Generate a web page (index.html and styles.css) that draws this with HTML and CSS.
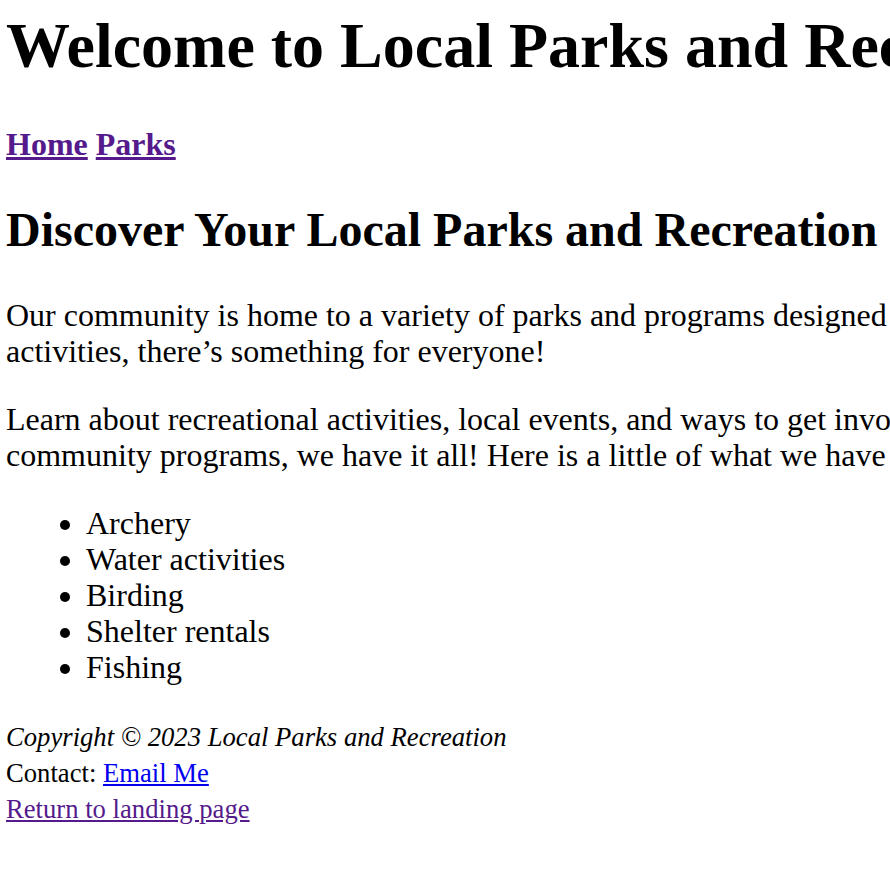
FILE: index.html
```html
<!DOCTYPE html>
<html lang="en">
<head>
<meta charset="utf-8">
<title>Local Parks and Recreation</title>
<link rel="stylesheet" href="styles.css">
</head>
<body>
<header>
<h1 class="title">Welcome to Local Parks and Recreation</h1>
<nav class="nav"><a class="visited" href="#home">Home</a> <a class="visited" href="#parks">Parks</a></nav>
</header>
<main>
<h2 class="subtitle">Discover Your Local Parks and Recreation</h2>
<p class="text">Our community is home to a variety of parks and programs designed for residents of all ages. Whether you love outdoor<br>activities, there’s something for everyone!</p>
<p class="text">Learn about recreational activities, local events, and ways to get involved. From nature trails and picnic areas to<br>community programs, we have it all! Here is a little of what we have to offer:</p>
<ul class="list">
<li>Archery</li>
<li>Water activities</li>
<li>Birding</li>
<li>Shelter rentals</li>
<li>Fishing</li>
</ul>
</main>
<footer class="footer">
<div class="copy">Copyright © 2023 Local Parks and Recreation</div>
<div class="contact">Contact: <a class="link" href="#email">Email Me</a></div>
<div class="back"><a class="visited" href="#landing">Return to landing page</a></div>
</footer>
</body>
</html>
```
FILE: styles.css
```css
html, body {
  overflow: hidden;
}
body {
  margin: 0;
  padding: 0 0 0 6px;
  font-family: "Liberation Serif", "Times New Roman", serif;
  font-size: 32px;
  line-height: 36px;
  color: #000;
  background: #fff;
  white-space: nowrap;
}
.title {
  font-size: 64px;
  line-height: 74px;
  font-weight: bold;
  margin: 9px 0 43px;
}
.nav {
  font-weight: bold;
}
.visited {
  color: #551a8b;
}
.link {
  color: #0000ee;
}
.subtitle {
  font-size: 48px;
  line-height: 55px;
  font-weight: bold;
  margin: 40px 0;
}
.text {
  margin: 32px 0;
}
.list {
  margin: 32px 0;
  padding-left: 80px;
}
.footer {
  margin-top: 34px;
  font-size: 26.67px;
  line-height: 36px;
}
.copy {
  font-style: italic;
}
```
